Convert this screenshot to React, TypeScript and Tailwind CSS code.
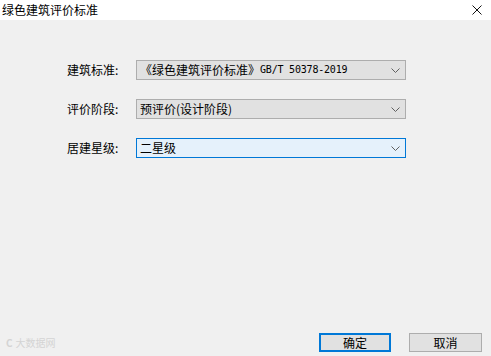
const font = { fontFamily: '"Noto Sans CJK SC", "Liberation Sans", sans-serif' }

function Chevron() {
  return (
    <svg width="9" height="5" viewBox="0 0 9 5" className="shrink-0">
      <path d="M0.5 0.5 L4.5 4.5 L8.5 0.5" fill="none" stroke="#606060" strokeWidth="1" />
    </svg>
  )
}

function Combo({ value, active }: { value: React.ReactNode; active?: boolean }) {
  return (
    <div
      className={
        'flex h-[20px] w-[270px] items-center justify-between border pl-[3px] pr-[5px] ' +
        (active ? 'border-[#0078d7] bg-[#e5f1fb]' : 'border-[#adadad] bg-[#e1e1e1]')
      }
    >
      <span className="flex items-center text-[12px] leading-none text-black whitespace-nowrap">{value}</span>
      <Chevron />
    </div>
  )
}

export default function App() {
  const rows = [
    {
      label: '建筑标准:',
      value: (
        <>
          <span>《绿色建筑评价标准》</span>
          <span
            className="text-[10px] font-normal tracking-[-0.2px]"
            style={{ fontFamily: '"DejaVu Sans Mono", "Liberation Mono", monospace' }}
          >
            GB/T 50378-2019
          </span>
        </>
      ),
    },
    { label: '评价阶段:', value: '预评价(设计阶段)' },
    { label: '居建星级:', value: '二星级', active: true },
  ]

  return (
    <div className="flex h-[356px] w-[491px] flex-col bg-[#f0f0f0] text-black" style={font}>
      {/* 标题栏 */}
      <div className="flex h-[20px] items-center justify-between bg-white pl-[2px] pr-[9px]">
        <span className="text-[12px] leading-none">绿色建筑评价标准</span>
        <svg width="10" height="10" viewBox="0 0 10 10">
          <path d="M0.5 0.5 L9.5 9.5 M9.5 0.5 L0.5 9.5" stroke="#111" strokeWidth="1" />
        </svg>
      </div>

      <div className="flex flex-col gap-[19px] pl-[67px] pt-[40px]">
        {rows.map((r) => (
          <div key={r.label} className="flex items-center">
            <span className="w-[69px] text-[12px] leading-none">{r.label}</span>
            <Combo value={r.value} active={r.active} />
          </div>
        ))}
      </div>

      <div className="mt-auto flex items-center justify-between pb-[4px] pl-[6px] pr-[9px]">
        <div className="flex items-center gap-[3px] text-[10px] leading-none text-[#d4d4d4]">
          <span className="font-bold">C</span>
          <span>大数据网</span>
        </div>
        <div className="flex gap-[18px]">
          <button className="h-[19px] w-[72px] border-2 border-[#0078d7] bg-[#e1e1e1] text-[12px] leading-none">确定</button>
          <button className="h-[19px] w-[73px] border border-[#adadad] bg-[#e1e1e1] text-[12px] leading-none">取消</button>
        </div>
      </div>
    </div>
  )
}
